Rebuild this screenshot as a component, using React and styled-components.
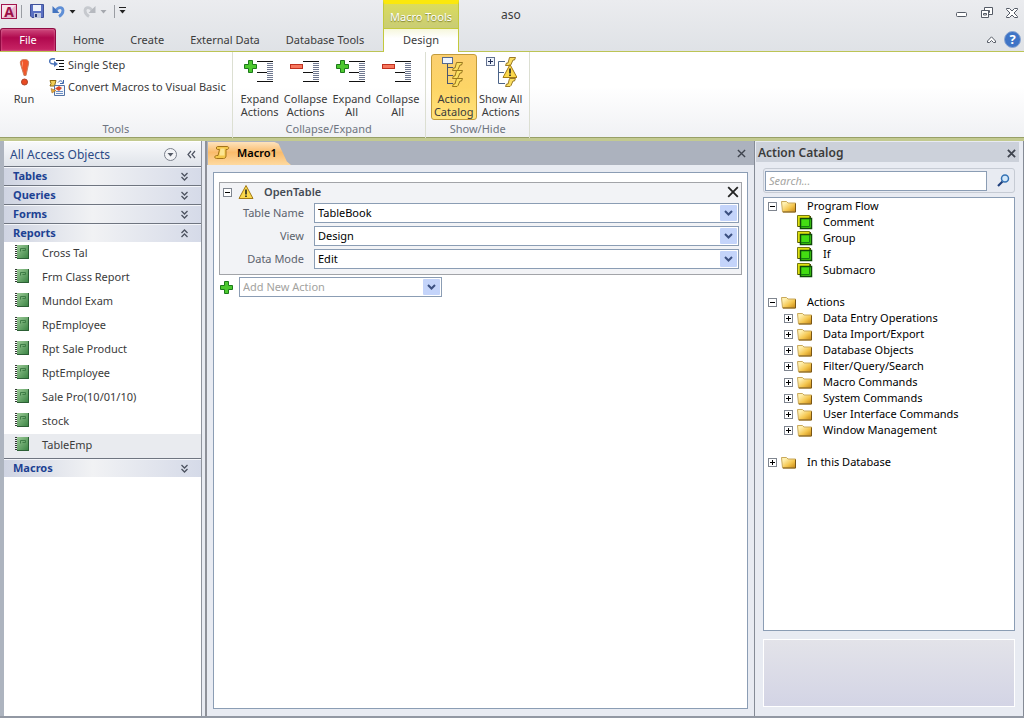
/* eslint-disable react/prop-types */
import styled, { createGlobalStyle, css } from "styled-components";

const GlobalStyle = createGlobalStyle`
  * {
    box-sizing: border-box;
  }

  body {
    margin: 0;
    color: #3b3b3b;
    font-family: "Noto Sans", "Open Sans", sans-serif;
    font-size: 11px;
    line-height: 16px;
  }

  button,
  input,
  select {
    font: inherit;
    color: inherit;
  }

  button {
    padding: 0;
    border: none;
    background: none;
  }

  svg {
    display: block;
    flex: none;
  }
`;

const Window = styled.div`
  display: flex;
  flex-direction: column;
  min-height: 100vh;
  background-color: #e8ebf2;
`;

/* ---------- title bar and tabs ---------- */

const Header = styled.header`
  display: grid;
  grid-template-columns: 383px 76px 1fr auto;
  grid-template-rows: 28px 24px;
  background: linear-gradient(#ebecef, #dfe2e6);
`;

const QuickAccess = styled.div`
  display: flex;
  align-items: center;
  padding: 0 0 6px 1px;
`;

const QuickButton = styled.button`
  display: flex;
  align-items: center;
  margin-left: ${(props) => props.$gap || 0}px;
`;

const Divider = styled.span`
  width: 1px;
  height: 13px;
  margin: 0 0 0 ${(props) => props.$gap || 0}px;
  background-color: #9a9da3;
`;

const ContextLabel = styled.div`
  padding-top: 5px;
  border: solid #c3c93c;
  border-width: 0 1px;
  border-top: 4px solid #fbe80c;
  background: linear-gradient(#dbdc5c, #c9cc75);
  color: #fff;
  text-align: center;
  text-shadow: 0 1px 1px #7d8130;
  white-space: nowrap;
`;

const Title = styled.div`
  padding: 7px 0 0 42px;
  font-size: 12px;
`;

const HeaderIcons = styled.div`
  display: flex;
  align-items: center;
  justify-content: flex-end;
  gap: 13px;
  padding: 0 6px 2px 0;
`;

const Tabs = styled.nav`
  display: flex;
  border-bottom: 1px solid #bcc455;
`;

const Tab = styled.button`
  padding: 0 13px;
  white-space: nowrap;
`;

const FileTab = styled(Tab)`
  width: 56px;
  margin-right: 4px;
  border: 1px solid #8e0b42;
  border-bottom: none;
  border-radius: 3px 3px 0 0;
  background: linear-gradient(#cf4a7d, #b0094e 40%, #c92666);
  box-shadow: inset 0 0 2px #e88db0;
  color: #fff;
`;

const ActiveTab = styled(Tab)`
  border: solid #c3c93c;
  border-width: 1px 1px 0;
  padding: 0 0 1px;
  background: linear-gradient(#f6f7dc, #fff 40%);
`;

const HeaderLine = styled.div`
  grid-column: span 2;
  display: flex;
  align-items: center;
  justify-content: flex-end;
  gap: 8px;
  padding-right: 3px;
  border-bottom: 1px solid #bcc455;
`;

/* ---------- ribbon ---------- */

const Ribbon = styled.div`
  display: flex;
  height: 89px;
  border-bottom: 3px solid #c3ca90;
  background: linear-gradient(#fff 40%, #f0f1f4);
  box-shadow: inset 0 -1px 0 #98a067;
`;

const Group = styled.section`
  display: flex;
  flex-direction: column;
  padding: 2px 4px 0;
  border-right: 1px solid #dcdfd2;

  &:last-child {
    padding-left: 5px;
  }
`;

const GroupContent = styled.div`
  display: flex;
  height: 66px;
`;

const GroupLabel = styled.div`
  padding-top: 1px;
  color: #6e7480;
  text-align: center;
`;

const BigButton = styled.button`
  display: flex;
  flex-direction: column;
  align-items: center;
  gap: 4px;
  width: ${(props) => props.$width || 46}px;
  padding-top: 2px;
  line-height: 13px;
  white-space: pre-line;

  ${(props) =>
    props.$active &&
    css`
      padding-top: 1px;
      border: 1px solid #c29b3c;
      border-radius: 3px;
      background: linear-gradient(#fbcf70, #fdd566 50%, #ffe27a);
    `}
`;

const SmallButtons = styled.div`
  display: flex;
  flex-direction: column;
`;

const SmallButton = styled.button`
  display: flex;
  align-items: center;
  gap: 3px;
  height: 22px;
  padding: 0 2px 0 5px;
  white-space: nowrap;
`;

/* ---------- workspace ---------- */

const Workspace = styled.div`
  display: flex;
  flex: 1;
  border-bottom: 2px solid #9298a3;
`;

const NavPane = styled.aside`
  width: 202px;
  padding-top: 1px;
  border-left: 4px solid #adb4bf;
  border-right: 1px solid #8f949e;
  background-color: #fff;
`;

const NavHeader = styled.div`
  display: flex;
  align-items: center;
  height: 24px;
  padding: 0 5px 0 6px;
  background: linear-gradient(#f8f9fb, #e0e4ea);
  color: #2b4a86;
  font-size: 12px;
`;

const NavTitle = styled.span`
  flex: 1;
  padding-top: 1px;
`;

const NavBar = styled.button`
  display: flex;
  align-items: center;
  justify-content: space-between;
  width: 100%;
  height: 19px;
  padding: 0 12px 0 9px;
  border-top: 1px solid #6f7580;
  background: linear-gradient(90deg, #cfd4e2, #f1f2f4 45%, #d5dae8);
  box-shadow: inset 0 1px 0 #f4f6fa;
  color: #1d4293;
  font-weight: 700;
`;

const NavList = styled.ul`
  margin: 0;
  padding: 0;
  list-style: none;
`;

const NavItem = styled.li`
  display: flex;
  align-items: center;
  gap: 13px;
  height: 24px;
  padding: 0 0 2px 11px;
  background-color: ${(props) => (props.$selected ? "#e9ebef" : "#fff")};

  svg {
    margin-bottom: 2px;
  }
`;

const Splitter = styled.div`
  width: 5px;
  border-right: 2px solid #8e9199;
`;

const Document = styled.main`
  display: flex;
  flex: 1;
  flex-direction: column;
`;

const DocTabs = styled.div`
  display: flex;
  align-items: center;
  justify-content: space-between;
  height: 24px;
  padding: 0 8px 0 1px;
  background-color: #acb2be;
`;

const DocTab = styled.button`
  display: flex;
  align-items: center;
  gap: 7px;
  align-self: flex-end;
  width: 83px;
  height: 23px;
  padding: 0 0 2px 6px;
  background: linear-gradient(#fde3bd, #fabb6b 45%, #fdd9a0);
  clip-path: polygon(0 0, 80% 0, 85% 8%, 95% 85%, 100% 100%, 0 100%);
  color: #000;
  font-weight: 600;
`;

const Canvas = styled.div`
  flex: 1;
  margin: 7px 6px;
  padding: 9px 5px;
  border: 1px solid #8b9db4;
  background-color: #fff;
`;

const Card = styled.section`
  padding: 0 2px 2px 3px;
  border: 1px solid #a2a4a8;
  background-color: #f2f3f6;
`;

const CardHeader = styled.div`
  display: flex;
  align-items: center;
  height: 20px;
  padding-bottom: 2px;
  color: #444a54;
  font-weight: 600;
`;

const CardTitle = styled.span`
  flex: 1;
  margin-left: 10px;
`;

const Field = styled.label`
  display: grid;
  grid-template-columns: 81px 1fr;
  gap: 10px;
  align-items: center;
  margin-bottom: 3px;
  color: #5c626d;
  text-align: right;
`;

const SelectBox = styled.span`
  display: grid;
  width: ${(props) => props.$width || "100%"};
  height: 20px;
  border: 1px solid #8b9db4;
  background-color: #fff;

  select,
  svg {
    grid-area: 1 / 1;
  }

  svg {
    justify-self: end;
    align-self: center;
    margin-right: 1px;
    pointer-events: none;
  }
`;

const Select = styled.select`
  width: 100%;
  height: 18px;
  padding: 0 3px;
  border: none;
  background: none;
  appearance: none;
  color: ${(props) => (props.$muted ? "#a3a3a0" : "#000")};
`;

const AddRow = styled.div`
  display: flex;
  align-items: center;
  gap: 5px;
  margin-top: 2px;
`;

/* ---------- action catalog ---------- */

const Catalog = styled.aside`
  display: flex;
  flex-direction: column;
  width: 270px;
  padding: 1px 4px 0 1px;
  border-left: 1px solid #858b96;
  border-right: 1px solid #858b96;
`;

const CatalogHeader = styled.div`
  display: flex;
  align-items: center;
  justify-content: space-between;
  height: 20px;
  padding: 2px 3px 0 2px;
  background-color: #ccd1da;
  font-weight: 600;
  font-size: 12px;
`;

const SearchBar = styled.div`
  display: flex;
  align-items: center;
  justify-content: space-between;
  height: 25px;
  margin: 6px 4px 4px 7px;
  padding: 0 4px 0 1px;
  border: 1px solid #c6cbd4;
  border-radius: 3px;
`;

const SearchInput = styled.input`
  width: 222px;
  height: 20px;
  padding: 0 3px;
  border: 1px solid #8b9db4;
  background-color: #fff;

  &::placeholder {
    color: #a5a5a2;
    font-style: italic;
  }
`;

const Tree = styled.ul`
  flex: 1;
  margin: 0 4px 0 7px;
  padding: 0 0 0 4px;
  border: 1px solid #8b9db4;
  background-color: #fff;
  color: #000;
  list-style: none;
`;

const SubTree = styled.ul`
  margin: 0 0 16px;
  padding: 0 0 0 16px;
  list-style: none;
`;

const TreeRow = styled.div`
  display: flex;
  align-items: center;
  height: 16px;
  padding-left: ${(props) => (props.$leaf ? 13 : 0)}px;
  white-space: nowrap;
`;

const TreeLabel = styled.span`
  margin-left: 10px;
`;

const ExpandButton = styled.button`
  margin-right: ${(props) => props.$gap || 4}px;
`;

const HelpPanel = styled.div`
  height: 68px;
  margin: 8px 4px 9px 7px;
  border: 1px solid #fff;
  background: linear-gradient(#e3e3e9, #d3d4e5);
`;

/* ---------- icons ---------- */

const AccessIcon = () => (
  <svg width="17" height="17" viewBox="0 0 17 17">
    <rect x="0.5" y="1.5" width="15" height="14" fill="#f7e4ec" stroke="#a3154d" />
    <path d="M1 15L15 2V15z" fill="#eab6ca" />
    <text x="8" y="14" textAnchor="middle" fontSize="14" fontWeight="700" fill="#9c0f47">
      A
    </text>
  </svg>
);

const SaveIcon = () => (
  <svg width="14" height="14" viewBox="0 0 14 14">
    <path d="M0.5 0.5h13v13H2L0.5 12z" fill="#5a70c2" stroke="#3f519b" />
    <path d="M3 1h8v6H3z" fill="#eef2fb" />
    <path d="M4 9h7v5H4z" fill="#bfc7de" />
    <path d="M5 10h2v3H5z" fill="#2c3b78" />
  </svg>
);

const UndoIcon = () => (
  <svg width="13" height="13" viewBox="0 0 13 13">
    <path d="M4 5.500C6 2 10.500 1.500 11 5.500c0 2.500-1.500 4.500-4 6" fill="none" stroke="#5f8fd6" strokeWidth="2.800" />
    <path d="M0.500 1v7h7z" fill="#4474c0" />
  </svg>
);

const RedoIcon = () => (
  <svg width="13" height="13" viewBox="0 0 13 13">
    <path d="M9 5.500C7 2 2.500 1.500 2 5.500c0 2.500 1.500 4.500 4 6" fill="none" stroke="#c6c9ce" strokeWidth="2.800" />
    <path d="M12.500 1v7h-7z" fill="#b6b9bf" />
  </svg>
);

const CaretIcon = ({ color = "#222", bar }) => (
  <svg width="7" height="8" viewBox="0 0 7 8">
    {bar && <path d="M0 0.5h7" stroke={color} />}
    <path d="M0.5 3h6l-3 3.500z" fill={color} />
  </svg>
);

const MinimizeIcon = () => (
  <svg width="12" height="12" viewBox="0 0 12 12">
    <rect x="0.5" y="5.5" width="10" height="4" rx="1" fill="#fff" stroke="#555b66" />
  </svg>
);

const RestoreIcon = () => (
  <svg width="12" height="12" viewBox="0 0 12 12">
    <path d="M3.5 0.5h8v7h-8z" fill="#fff" stroke="#555b66" />
    <path d="M6.5 3.5h2v2h-2z" fill="#fff" stroke="#555b66" />
    <path d="M0.5 3.5h7v7h-7z" fill="#fff" stroke="#555b66" />
    <path d="M2.5 6.5h3v1.5h-3z" fill="#fff" stroke="#555b66" />
  </svg>
);

const CloseWindowIcon = () => (
  <svg width="12" height="10" viewBox="0 0 12 10">
    <path
      d="M0.5 0.5h3L6 3l2.500-2.500h3v1L8 5l3.500 3.500v1h-3L6 7 3.500 9.500h-3v-1L4 5 0.500 1.500z"
      fill="#fff"
      stroke="#555b66"
    />
  </svg>
);

const CollapseRibbonIcon = () => (
  <svg width="9" height="7" viewBox="0 0 9 7">
    <path d="M0.5 5L4.500 0.800 8.500 5v1.500h-2L4.500 4.500l-2 2h-2z" fill="#fff" stroke="#555b66" />
  </svg>
);

const HelpIcon = () => (
  <svg width="17" height="17" viewBox="0 0 17 17">
    <circle cx="8.500" cy="8.500" r="8" fill="#3e74c6" stroke="#8ba6d2" />
    <text x="8.500" y="13" textAnchor="middle" fontSize="13" fontWeight="700" fill="#fff">
      ?
    </text>
  </svg>
);

const RunIcon = () => (
  <svg width="30" height="32" viewBox="0 0 30 32">
    <path
      d="M15.500 3.500c3.500 0 4.500 1.500 4 4.500l-2.500 11.500h-2L11.500 8c-0.600-3 0.500-4.500 4-4.500z"
      fill="#f0572a"
      stroke="#c8805f"
    />
    <path d="M14 5c-1.500 1-1 3 0 7z" fill="#fba582" />
    <circle cx="15.500" cy="26" r="3" fill="#ea4a22" stroke="#a9452b" />
  </svg>
);

const StepIcon = () => (
  <svg width="16" height="14" viewBox="0 0 16 14">
    <path d="M6 1C2 0 0 2 1 4.500 2 6.500 4 6 6 6" fill="none" stroke="#4b73b8" strokeWidth="1.5" />
    <path d="M5 3l4 3-4 3z" fill="#4b73b8" />
    <path d="M7 2.500h8M10 5.500h5M10 8.500h5M7 11.500h8" stroke="#111" />
  </svg>
);

const ConvertIcon = () => (
  <svg width="16" height="17" viewBox="0 0 16 17">
    <path d="M1 1.500h6L5.500 7H1l1-2.500z" fill="#f0ce57" stroke="#8c6a12" />
    <path d="M9 3.500C11 1 13 1.500 14 4M14.500 1v3.500H11" fill="none" stroke="#3c66ad" />
    <path d="M5.500 6.500h10v10h-10z" fill="#f4f6fa" stroke="#5373a5" />
    <path d="M7 14.500h7M7 12.500h7" stroke="#6b8fc5" />
    <path d="M6 9.500l4-2.500 3 2-3 3z" fill="#d94c2b" />
    <path d="M2 9.500l5 2-4 2.500z" fill="#e9a73a" stroke="#91641a" strokeWidth="0.500" />
  </svg>
);

const PlusShape = () => (
  <path
    d="M5.500 1.500h4v4h4v4h-4v4h-4v-4h-4v-4h4z"
    fill="#4cc92f"
    stroke="#1c7a1a"
  />
);

const PlusIcon = () => (
  <svg width="15" height="15" viewBox="0 0 15 15">
    <PlusShape />
  </svg>
);

const ListIcon = ({ minus }) => (
  <svg width="32" height="32" viewBox="0 0 32 32">
    <path
      d="M23 7.500h6M23 9.500h6M23 11.500h6M23 13.500h6M23 15.500h6M23 17.500h6M23 19.500h6M23 21.500h6M23 23.500h6"
      stroke="#6f7890"
    />
    <path d="M13 5.500h16M13 16.500h10M13 25.500h16" stroke="#111" />
    {minus ? (
      <rect x="0.500" y="8.500" width="12" height="4" fill="#f7775e" stroke="#c0311f" />
    ) : (
      <g transform="translate(-1 3)">
        <PlusShape />
      </g>
    )}
  </svg>
);

const Scroll = ({ x, y }) => (
  <path
    transform={`translate(${x} ${y})`}
    d="M4.500 0.500h6l-1 2.500H8L6 7.500 5 8.500H0.500L1.500 6H3z"
    fill="#fbdf62"
    stroke="#8f6d17"
    strokeWidth="0.900"
  />
);

const CatalogIcon = () => (
  <svg width="32" height="32" viewBox="0 0 32 32">
    <path d="M9.500 8v20M10 11.500h5M10 19.500h5M10 27.500h5" fill="none" stroke="#4a5570" />
    <rect x="4.500" y="1.500" width="10" height="6" fill="#eef4ff" stroke="#56698f" />
    <Scroll x={14} y={6} />
    <Scroll x={14} y={14} />
    <Scroll x={14} y={22} />
  </svg>
);

const WarningShape = () => (
  <>
    <path d="M8 1.500L15 14.500H1z" fill="#fbd84b" stroke="#a27a17" strokeLinejoin="round" />
    <path d="M7.200 5.500h1.600v5H7.200zM7.200 11.500h1.600v1.500H7.200z" fill="#222" />
  </>
);

const ShowAllIcon = () => (
  <svg width="32" height="32" viewBox="0 0 32 32">
    <rect x="1.500" y="1.500" width="8" height="8" fill="#eef3fb" stroke="#63718f" />
    <path d="M3 5.500h5M5.500 3v5" stroke="#1e2c55" />
    <path d="M20 5.500h-6.500v22H20M14 16.500h5" fill="none" stroke="#4a6288" />
    <Scroll x={20} y={1} />
    <Scroll x={20} y={22} />
    <g transform="translate(17 7)">
      <WarningShape />
    </g>
  </svg>
);

const WarningIcon = () => (
  <svg width="16" height="16" viewBox="0 0 16 16">
    <WarningShape />
  </svg>
);

const DropCircleIcon = () => (
  <svg width="13" height="13" viewBox="0 0 13 13">
    <circle cx="6.500" cy="6.500" r="6" fill="#f3f4f7" stroke="#7b818c" />
    <path d="M3.500 5h6l-3 3.500z" fill="#555b66" />
  </svg>
);

const DoubleLeftIcon = () => (
  <svg width="9" height="9" viewBox="0 0 9 9">
    <path d="M4 1L1 4.500 4 8M8 1L5 4.500 8 8" fill="none" stroke="#4d5360" strokeWidth="1.200" />
  </svg>
);

const DoubleChevron = ({ up }) => (
  <svg width="9" height="9" viewBox="0 0 9 9">
    <path
      d={up ? "M1.500 4l3-3 3 3M1.500 8l3-3 3 3" : "M1.500 1l3 3 3-3M1.500 5l3 3 3-3"}
      fill="none"
      stroke="#4d5360"
      strokeWidth="1.300"
    />
  </svg>
);

const ReportIcon = () => (
  <svg width="14" height="14" viewBox="0 0 14 14">
    <defs>
      <linearGradient id="report" x1="0" y1="0" x2="1" y2="1">
        <stop offset="0" stopColor="#9ccb97" />
        <stop offset="1" stopColor="#35803f" />
      </linearGradient>
    </defs>
    <path d="M2 0h12v14H2z" fill="url(#report)" />
    <path d="M13.500 0v13.500H2" fill="none" stroke="#2c5f35" />
    <path d="M5.500 6.500v-3h5v2h-3" fill="none" stroke="#3f7d47" />
    <path d="M1 0v14" stroke="#333" strokeWidth="2" strokeDasharray="1 1" />
  </svg>
);

const ScrollTabIcon = () => (
  <svg width="16" height="15" viewBox="0 0 16 15">
    <path
      d="M3.500 1.500H13c2.500 0 2 3 0 3h-1v6.500c0 1.500-1 2.500-2.500 2.500h-7c-2.500 0-2-3 0-3h1.500l1.500-6H3.500c-1.500 0-1.500-3 0-3z"
      fill="#f5c74a"
      stroke="#a3741a"
    />
    <path d="M6.500 3.500h4v7h-5z" fill="#fce592" />
  </svg>
);

const CrossIcon = ({ size = 9, color = "#3f444e", width = 1.5 }) => (
  <svg width={size} height={size} viewBox="0 0 10 10">
    <path d="M1 1l8 8M9 1L1 9" stroke={color} strokeWidth={width} />
  </svg>
);

const ArrowIcon = () => (
  <svg width="17" height="16" viewBox="0 0 17 16">
    <rect width="17" height="16" rx="1" fill="#c4d4fa" />
    <path d="M5 6l3.500 3.500L12 6" fill="none" stroke="#3c5080" strokeWidth="2" />
  </svg>
);

const ToggleIcon = ({ open }) => (
  <svg width="9" height="9" viewBox="0 0 9 9">
    <rect x="0.500" y="0.500" width="8" height="8" fill="#fff" stroke="#7f858f" />
    <path d={open ? "M2 4.500h5" : "M2 4.500h5M4.500 2v5"} stroke="#000" />
  </svg>
);

const FolderIcon = () => (
  <svg width="16" height="13" viewBox="0 0 16 13">
    <defs>
      <linearGradient id="folder" x1="0" y1="0" x2="1" y2="1">
        <stop offset="0.200" stopColor="#fff0b0" />
        <stop offset="0.600" stopColor="#f4c64f" />
        <stop offset="1" stopColor="#c58512" />
      </linearGradient>
    </defs>
    <path d="M0.500 1.500h5l1.500 1.500h7.500v9H1.500z" fill="url(#folder)" stroke="#c9a95c" />
    <path d="M14.500 3.500v8.500H2" fill="none" stroke="#7a5614" />
  </svg>
);

const BlockIcon = () => (
  <svg width="16" height="16" viewBox="0 0 16 16">
    <path d="M0.500 1.500h12v11h-12z" fill="#dfe010" stroke="#75780f" />
    <path d="M1 12.500h12.500V2" fill="none" stroke="#4f520c" />
    <path d="M3.500 4.500h11v10h-11z" fill="#43dd12" stroke="#0d4a08" strokeWidth="1.500" />
    <path d="M4 12.500h8.500V5" fill="none" stroke="#178012" />
  </svg>
);

const SearchIcon = () => (
  <svg width="13" height="13" viewBox="0 0 13 13">
    <path d="M1 12l4.500-4.500" stroke="#1f3f7c" strokeWidth="2.200" />
    <circle cx="8" cy="4.500" r="3.500" fill="#d3e8fa" stroke="#3472b4" strokeWidth="1.500" />
  </svg>
);

/* ---------- data ---------- */

const tabs = ["Home", "Create", "External Data", "Database Tools"];

const reports = [
  "Cross Tal",
  "Frm Class Report",
  "Mundol Exam",
  "RpEmployee",
  "Rpt Sale Product",
  "RptEmployee",
  "Sale Pro(10/01/10)",
  "stock",
  "TableEmp",
];

const fields = [
  { label: "Table Name", value: "TableBook" },
  { label: "View", value: "Design" },
  { label: "Data Mode", value: "Edit" },
];

const programFlow = ["Comment", "Group", "If", "Submacro"];

const actions = [
  "Data Entry Operations",
  "Data Import/Export",
  "Database Objects",
  "Filter/Query/Search",
  "Macro Commands",
  "System Commands",
  "User Interface Commands",
  "Window Management",
];

/* ---------- parts ---------- */

function TopBar() {
  return (
    <Header>
      <QuickAccess>
        <AccessIcon />
        <Divider $gap={3} />
        <QuickButton $gap={8} aria-label="Save">
          <SaveIcon />
        </QuickButton>
        <QuickButton $gap={8} aria-label="Undo">
          <UndoIcon />
        </QuickButton>
        <QuickButton $gap={4} aria-label="Undo list">
          <CaretIcon />
        </QuickButton>
        <QuickButton $gap={7} aria-label="Redo">
          <RedoIcon />
        </QuickButton>
        <QuickButton $gap={4} aria-label="Redo list">
          <CaretIcon color="#a5a8ae" />
        </QuickButton>
        <Divider $gap={7} />
        <QuickButton $gap={4} aria-label="Customize toolbar">
          <CaretIcon bar />
        </QuickButton>
      </QuickAccess>
      <ContextLabel>Macro Tools</ContextLabel>
      <Title>aso</Title>
      <HeaderIcons>
        <button aria-label="Minimize">
          <MinimizeIcon />
        </button>
        <button aria-label="Restore">
          <RestoreIcon />
        </button>
        <button aria-label="Close">
          <CloseWindowIcon />
        </button>
      </HeaderIcons>

      <Tabs>
        <FileTab>File</FileTab>
        {tabs.map((tab) => (
          <Tab key={tab}>{tab}</Tab>
        ))}
      </Tabs>
      <ActiveTab>Design</ActiveTab>
      <HeaderLine>
        <button aria-label="Minimize ribbon">
          <CollapseRibbonIcon />
        </button>
        <button aria-label="Help">
          <HelpIcon />
        </button>
      </HeaderLine>
    </Header>
  );
}

function RibbonBar() {
  return (
    <Ribbon>
      <Group>
        <GroupContent>
          <BigButton $width={40}>
            <RunIcon />
            Run
          </BigButton>
          <SmallButtons>
            <SmallButton>
              <StepIcon />
              Single Step
            </SmallButton>
            <SmallButton>
              <ConvertIcon />
              Convert Macros to Visual Basic
            </SmallButton>
          </SmallButtons>
        </GroupContent>
        <GroupLabel>Tools</GroupLabel>
      </Group>
      <Group>
        <GroupContent>
          <BigButton>
            <ListIcon />
            {"Expand\nActions"}
          </BigButton>
          <BigButton>
            <ListIcon minus />
            {"Collapse\nActions"}
          </BigButton>
          <BigButton>
            <ListIcon />
            {"Expand\nAll"}
          </BigButton>
          <BigButton>
            <ListIcon minus />
            {"Collapse\nAll"}
          </BigButton>
        </GroupContent>
        <GroupLabel>Collapse/Expand</GroupLabel>
      </Group>
      <Group>
        <GroupContent>
          <BigButton $active>
            <CatalogIcon />
            {"Action\nCatalog"}
          </BigButton>
          <BigButton $width={48}>
            <ShowAllIcon />
            {"Show All\nActions"}
          </BigButton>
        </GroupContent>
        <GroupLabel>Show/Hide</GroupLabel>
      </Group>
    </Ribbon>
  );
}

function Navigation() {
  return (
    <NavPane>
      <NavHeader>
        <NavTitle>All Access Objects</NavTitle>
        <QuickButton aria-label="Filter objects">
          <DropCircleIcon />
        </QuickButton>
        <QuickButton $gap={10} aria-label="Hide pane">
          <DoubleLeftIcon />
        </QuickButton>
      </NavHeader>
      {["Tables", "Queries", "Forms"].map((name) => (
        <NavBar key={name}>
          {name}
          <DoubleChevron />
        </NavBar>
      ))}
      <NavBar>
        Reports
        <DoubleChevron up />
      </NavBar>
      <NavList>
        {reports.map((name) => (
          <NavItem key={name} $selected={name === "TableEmp"}>
            <ReportIcon />
            {name}
          </NavItem>
        ))}
      </NavList>
      <NavBar>
        Macros
        <DoubleChevron />
      </NavBar>
    </NavPane>
  );
}

function MacroDocument() {
  return (
    <Document>
      <DocTabs>
        <DocTab>
          <ScrollTabIcon />
          Macro1
        </DocTab>
        <button aria-label="Close macro">
          <CrossIcon />
        </button>
      </DocTabs>
      <Canvas>
        <Card>
          <CardHeader>
            <ExpandButton $gap={6} aria-label="Collapse action">
              <ToggleIcon open />
            </ExpandButton>
            <WarningIcon />
            <CardTitle>OpenTable</CardTitle>
            <button aria-label="Delete action">
              <CrossIcon size={12} color="#222" />
            </button>
          </CardHeader>
          {fields.map(({ label, value }) => (
            <Field key={label}>
              {label}
              <SelectBox>
                <Select defaultValue={value}>
                  <option>{value}</option>
                </Select>
                <ArrowIcon />
              </SelectBox>
            </Field>
          ))}
        </Card>
        <AddRow>
          <PlusIcon />
          <SelectBox $width="203px">
            <Select $muted aria-label="Add New Action">
              <option>Add New Action</option>
            </Select>
            <ArrowIcon />
          </SelectBox>
        </AddRow>
      </Canvas>
    </Document>
  );
}

function TreeFolder({ name, open, children }) {
  return (
    <li>
      <TreeRow>
        <ExpandButton aria-label={`Toggle ${name}`}>
          <ToggleIcon open={open} />
        </ExpandButton>
        <FolderIcon />
        <TreeLabel>{name}</TreeLabel>
      </TreeRow>
      {children && <SubTree>{children}</SubTree>}
    </li>
  );
}

function ActionCatalog() {
  return (
    <Catalog>
      <CatalogHeader>
        Action Catalog
        <button aria-label="Close catalog">
          <CrossIcon width={2} />
        </button>
      </CatalogHeader>
      <SearchBar>
        <SearchInput placeholder="Search..." aria-label="Search actions" />
        <button aria-label="Search">
          <SearchIcon />
        </button>
      </SearchBar>
      <Tree>
        <TreeFolder name="Program Flow" open>
          {programFlow.map((name) => (
            <li key={name}>
              <TreeRow $leaf>
                <BlockIcon />
                <TreeLabel>{name}</TreeLabel>
              </TreeRow>
            </li>
          ))}
        </TreeFolder>
        <TreeFolder name="Actions" open>
          {actions.map((name) => (
            <TreeFolder key={name} name={name} />
          ))}
        </TreeFolder>
        <TreeFolder name="In this Database" />
      </Tree>
      <HelpPanel />
    </Catalog>
  );
}

function App() {
  return (
    <Window>
      <GlobalStyle />
      <TopBar />
      <RibbonBar />
      <Workspace>
        <Navigation />
        <Splitter />
        <MacroDocument />
        <ActionCatalog />
      </Workspace>
    </Window>
  );
}

export default App;
